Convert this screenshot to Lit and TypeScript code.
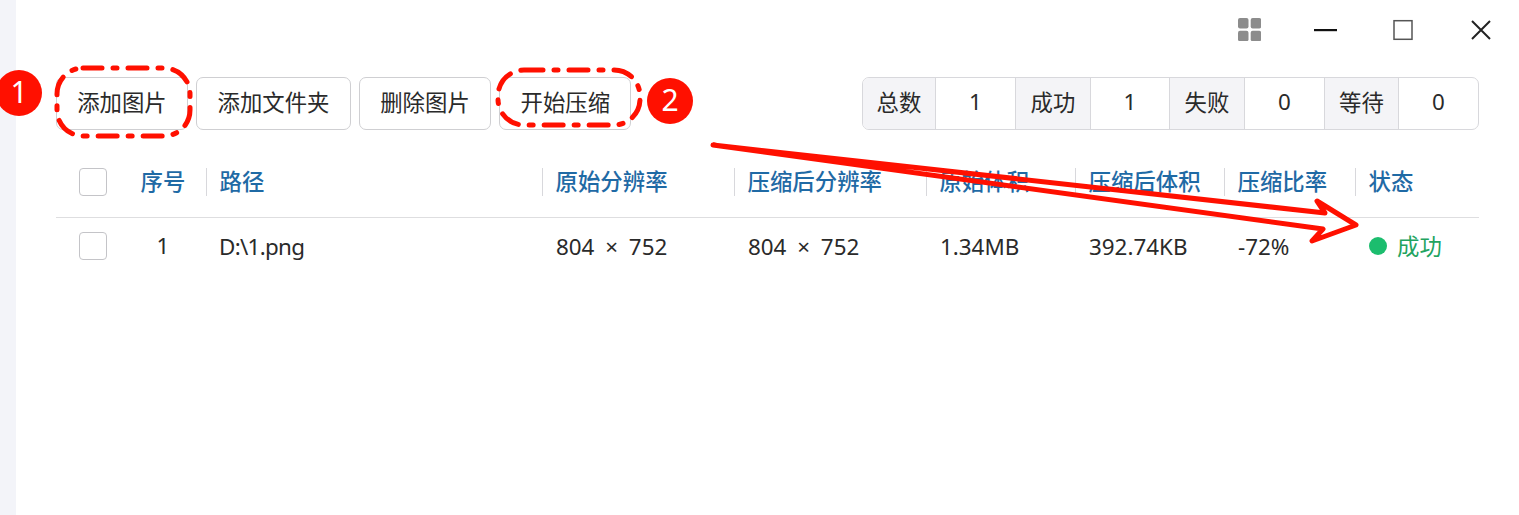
import { LitElement, html, css, svg } from "lit";
import { customElement } from "lit/decorators.js";

const BTNS = ["添加图片", "添加文件夹", "删除图片", "开始压缩"];
const STATS: [string, string][] = [["总数", "1"], ["成功", "1"], ["失败", "0"], ["等待", "0"]];
const HEAD = ["序号", "路径", "原始分辨率", "压缩后分辨率", "原始体积", "压缩后体积", "压缩比率", "状态"];

@customElement("app-root")
export class AppRoot extends LitElement {
  static styles = css`
    :host {
      display: block;
      font-family: "Noto Sans", "Noto Sans CJK SC", sans-serif;
      color: #2a2a2a;
    }
    .page { position: relative; display: flex; height: 515px; overflow: hidden; background: #fff; }
    .side { width: 16px; flex: none; background: #f3f4f9; }
    .main { flex: 1; min-width: 0; padding: 0 40px; }
    .title { height: 77px; display: flex; justify-content: flex-end; align-items: flex-start; box-sizing: border-box; padding-top: 18px; margin-right: -12px; }
    .title svg { display: block; flex: none; }
    .grid-ic { margin-right: 53px; }
    .min-ic { margin-right: 56px; }
    .max-ic { margin-right: 58px; }
    .bar { display: flex; justify-content: space-between; }
    .btns { display: flex; gap: 8.4px; }
    .btn { height: 53px; box-sizing: border-box; padding: 0 20.2px 4px; border: 1px solid #cfcfd2; border-radius: 7px; background: #fff; font: inherit; font-size: 22.4px; color: #2a2a2a; display: flex; align-items: center; white-space: nowrap; }
    .stats { display: grid; grid-template-columns: 73px 80px 75px 79px 75px 80px 74px 79px; height: 53px; box-sizing: border-box; border: 1px solid #d8d8dc; border-radius: 7px; overflow: hidden; font-size: 22.4px; }
    .k, .v { display: flex; align-items: center; justify-content: center; box-sizing: border-box; border-right: 1px solid #d8d8dc; padding-bottom: 4px; }
    .v { padding-bottom: 5px; }
    .k { background: #f4f4f7; }
    .stats > :last-child { border-right: none; }
    .table { margin-top: 17px; }
    .tr { display: grid; grid-template-columns: 62px 88px 336px 192px 192px 149px 149px 131px 123px; align-items: center; }
    .thead { height: 70px; border-bottom: 1px solid #dedee0; font-size: 22.4px; color: #1f6aa5; font-weight: 500; }
    .tbody { height: 56px; font-size: 22.4px; color: #2a2a2a; }
    .cb { width: 28px; height: 28px; box-sizing: border-box; border: 1px solid #c4c4c8; border-radius: 4px; margin-left: 23px; background: #fff; }
    .center { text-align: center; line-height: 26px; padding: 0 0 1px 2px; }
    .th { height: 28px; line-height: 28px; padding-left: 12.6px; border-left: 1px solid #d8d8dc; white-space: nowrap; }
    .td { padding-left: 14px; white-space: nowrap; }
    .path { letter-spacing: -0.7px; padding-left: 13px; }
    .res { word-spacing: 5px; }
    .status { display: flex; align-items: center; gap: 10px; color: #22a35f; font-size: 22.4px; padding-bottom: 1px; }
    .dot { width: 18px; height: 18px; border-radius: 50%; background: #1cbd6e; flex: none; }
    .over { position: absolute; inset: 0; width: 100%; height: 100%; pointer-events: none; }
    .num { font-family: "Noto Sans", sans-serif; font-size: 30px; fill: #fff; text-anchor: middle; }
  `;

  render() {
    return html`
      <div class="page">
        <div class="side"></div>
        <div class="main">
          <div class="title">
            <svg class="grid-ic" width="23" height="23" viewBox="0 0 23 23" fill="#8c8c8c">
              <rect x="0" y="0" width="10.5" height="10.5" rx="2"/>
              <rect x="12.7" y="0" width="10.5" height="10.5" rx="2"/>
              <rect x="0" y="12.7" width="10.5" height="10.5" rx="2"/>
              <rect x="12.7" y="12.7" width="10.5" height="10.5" rx="2"/>
            </svg>
            <svg class="min-ic" width="23" height="23" viewBox="0 0 23 23"><rect x="0" y="11" width="23" height="2.2" fill="#111"/></svg>
            <svg class="max-ic" width="20" height="23" viewBox="0 0 20 23"><rect x="1" y="2.7" width="18" height="18.6" fill="none" stroke="#555" stroke-width="1.5"/></svg>
            <svg width="20" height="23" viewBox="0 0 20 23"><path d="M1 3 L19 21 M19 3 L1 21" fill="none" stroke="#222" stroke-width="2"/></svg>
          </div>
          <div class="bar">
            <div class="btns">${BTNS.map((b) => html`<div class="btn">${b}</div>`)}</div>
            <div class="stats">
              ${STATS.map(([k, v]) => html`<div class="k">${k}</div><div class="v">${v}</div>`)}
            </div>
          </div>
          <div class="table">
            <div class="tr thead">
              <div><div class="cb"></div></div>
              <div class="center">${HEAD[0]}</div>
              ${HEAD.slice(1).map((h) => html`<div class="th">${h}</div>`)}
            </div>
            <div class="tr tbody">
              <div><div class="cb"></div></div>
              <div class="center">1</div>
              <div class="td path">D:\\1.png</div>
              <div class="td res">804 × 752</div>
              <div class="td res">804 × 752</div>
              <div class="td">1.34MB</div>
              <div class="td">392.74KB</div>
              <div class="td">-72%</div>
              <div class="td status"><span class="dot"></span>成功</div>
            </div>
          </div>
        </div>
        <svg class="over" viewBox="0 0 1519 515">
          ${svg`
            <rect x="57" y="68" width="133" height="68" rx="26" fill="none" stroke="#ff1000" stroke-width="5" stroke-linecap="round" stroke-dasharray="19 11 4 11"/>
            <rect x="498" y="70" width="142" height="55" rx="26" fill="none" stroke="#ff1000" stroke-width="5" stroke-linecap="round" stroke-dasharray="19 11 4 11"/>
            <circle cx="19" cy="93" r="23" fill="#ff1000"/>
            <text class="num" x="19" y="103">1</text>
            <circle cx="670" cy="101" r="23" fill="#ff1000"/>
            <text class="num" x="670" y="111">2</text>
            <path d="M713 145 L1325 213 L1317 201 L1356 225 L1312 241 L1323 229 Z" fill="none" stroke="#ff1000" stroke-width="5" stroke-linejoin="round"/>
          `}
        </svg>
      </div>
    `;
  }
}
